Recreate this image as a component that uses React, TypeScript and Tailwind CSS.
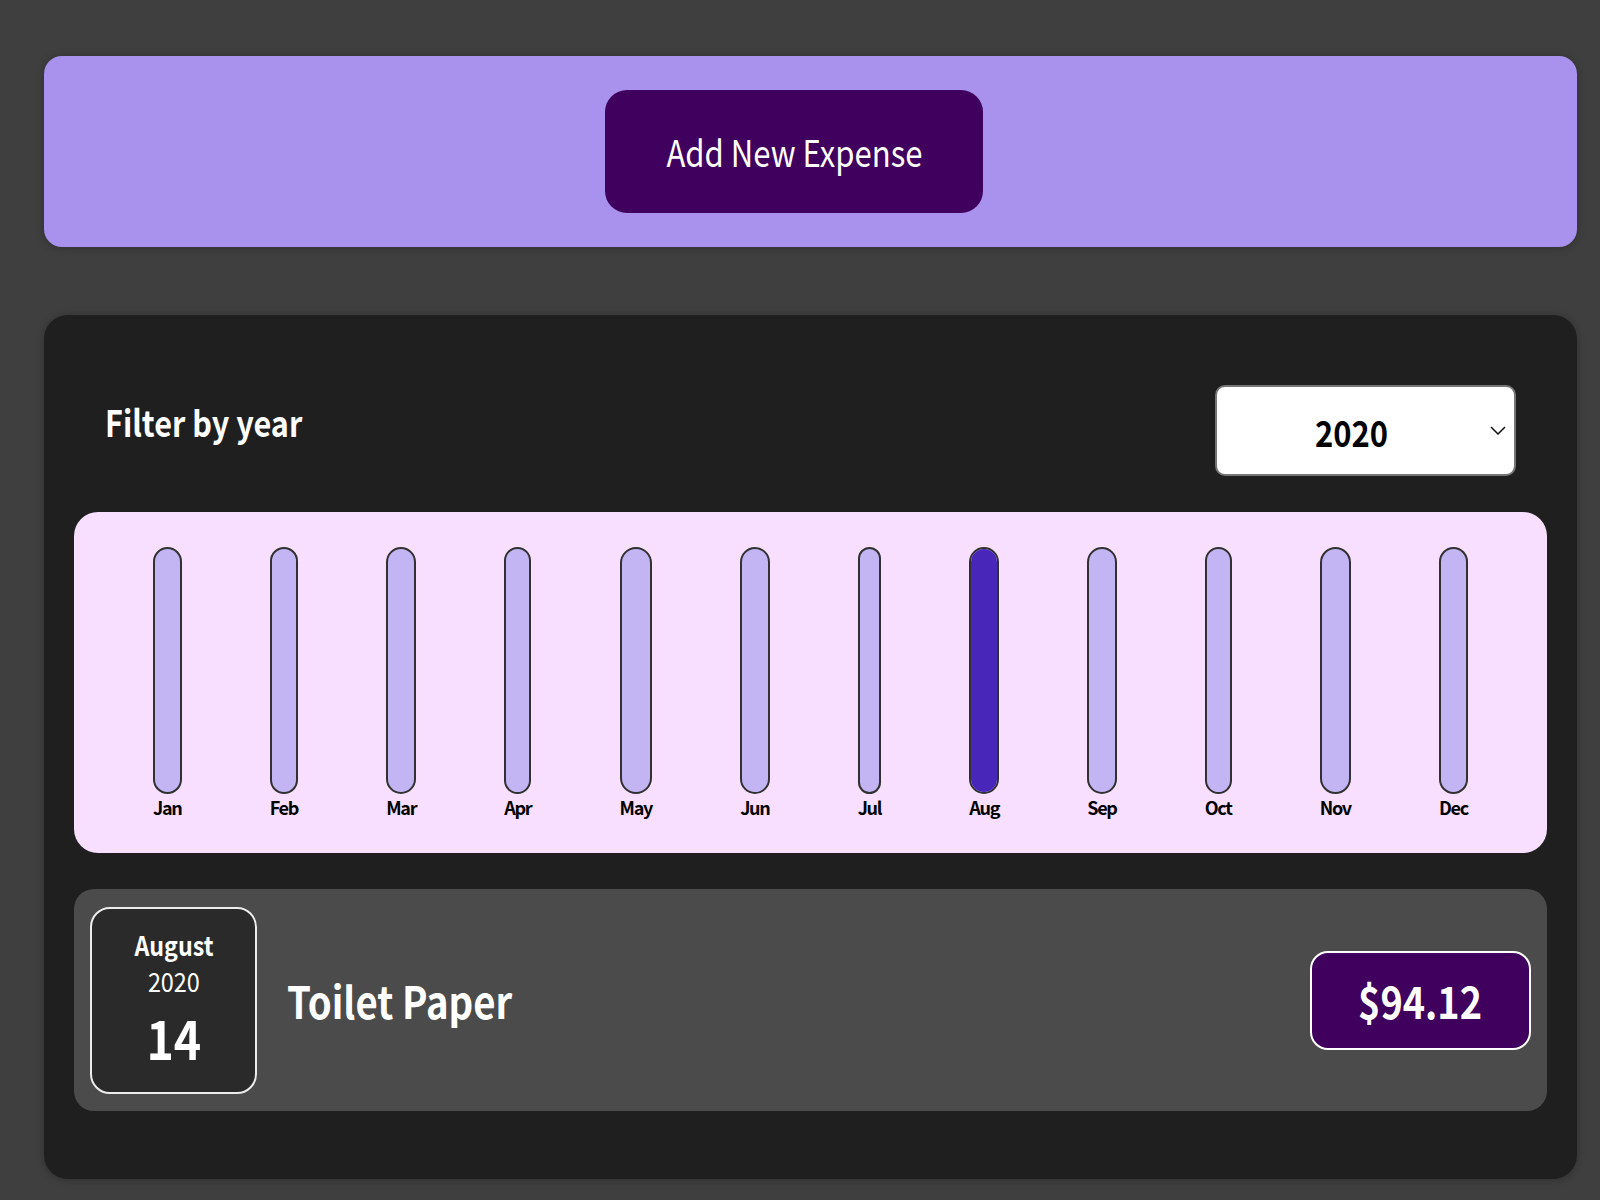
const months = ['Jan', 'Feb', 'Mar', 'Apr', 'May', 'Jun', 'Jul', 'Aug', 'Sep', 'Oct', 'Nov', 'Dec'];

// only August has an expense, so it is the max
const values = [0, 0, 0, 0, 0, 0, 0, 94.12, 0, 0, 0, 0];

function ChartBar({ label, value, max }: { label: string; value: number; max: number }) {
  const fill = max > 0 ? Math.round((value / max) * 100) + '%' : '0%';
  return (
    <div className="flex h-full flex-col items-center">
      <div className="flex w-full flex-1 flex-col justify-end overflow-hidden rounded-full border-2 border-[#313131] bg-[#c3b4f3]">
        <div className="w-full bg-[#4826b9]" style={{ height: fill }} />
      </div>
      <div className="pt-[2px] text-center text-[18px] font-bold leading-[22px] tracking-[-1.3px] text-black">{label}</div>
    </div>
  );
}

export default function App() {
  const max = Math.max(...values);
  return (
    <div
      className="min-h-[1200px] bg-[#3f3f3f] pt-[56px] pb-[21px]"
      style={{ fontFamily: '"Noto Sans CJK JP", "Noto Sans", sans-serif' }}
    >
      {/* New expense */}
      <div className="ml-[44px] w-[1533px] rounded-[18px] bg-[#a892ee] py-[34px] shadow-[0_1px_8px_rgba(0,0,0,0.25)]">
        <button className="ml-[561px] h-[123px] w-[378px] rounded-[22px] bg-[#40005d] text-[37px] text-white">
          <span className="inline-block scale-x-[0.84]">Add New Expense</span>
        </button>
      </div>

      {/* Expenses */}
      <div className="ml-[44px] mt-[68px] w-[1533px] rounded-[24px] bg-[#1f1f1f] px-[30px] pt-[70px] pb-[68px] shadow-[0_1px_8px_rgba(0,0,0,0.25)]">
        <div className="flex items-center justify-between px-[31px]">
          <label className="-mt-[20px] inline-block origin-left scale-x-[0.85] text-[36px] font-bold text-white">
            Filter by year
          </label>
          <div className="relative h-[91px] w-[301px]">
            <div className="flex h-full w-full items-center justify-center rounded-[10px] border-2 border-[#767676] bg-white pr-[28px] text-[36px] font-bold text-black">
              <span className="inline-block scale-x-[0.86]">2020</span>
            </div>
            <svg
              className="pointer-events-none absolute right-[10px] top-[41px]"
              width="16"
              height="9"
              viewBox="0 0 16 9"
              fill="none"
              stroke="#111"
              strokeWidth="1.5"
            >
              <path d="M1 1l7 7 7-7" />
            </svg>
          </div>
        </div>

        <div className="mt-[36px] flex h-[341px] justify-around rounded-[24px] bg-[#f8dfff] px-[35px] py-[35px]">
          {months.map((m, i) => (
            <ChartBar key={m} label={m} value={values[i]} max={max} />
          ))}
        </div>

        <div className="mt-[36px] flex h-[222px] items-center rounded-[20px] bg-[#4b4b4b] px-[16px]">
          <div className="flex h-[187px] w-[167px] flex-col items-center justify-center rounded-[20px] border-2 border-[#ececec] bg-[#2a2a2a] pb-[9px] text-white">
            <div className="scale-x-[0.86] text-[27px] font-bold leading-[36px]">August</div>
            <div className="scale-x-[0.9] text-[26px] leading-[36px]">2020</div>
            <div className="mt-[11px] scale-x-[0.86] text-[54px] font-bold leading-[54px]">14</div>
          </div>
          <h2 className="ml-[30px] flex-1 text-[44px] font-bold text-white">
            <span className="inline-block origin-left scale-x-[0.87]">Toilet Paper</span>
          </h2>
          <div className="flex h-[99px] w-[221px] items-center justify-center rounded-[18px] border-2 border-white bg-[#40005d] text-[44px] font-bold text-white">
            <span className="inline-block scale-x-[0.86]">$94.12</span>
          </div>
        </div>
      </div>
    </div>
  );
}
